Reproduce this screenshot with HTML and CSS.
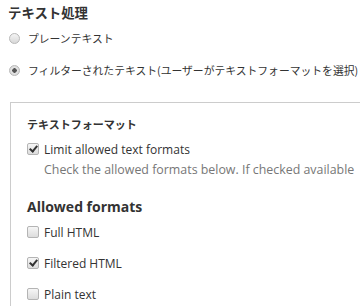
FILE: index.html
```html
<!DOCTYPE html>
<html lang="ja">
<head>
    <meta charset="UTF-8">
    <meta name="viewport" content="width=device-width, initial-scale=1.0">
    <title>テキスト処理</title>
    <link rel="stylesheet" href="styles.css">
</head>
<body>
    <div class="form-item">
        <h2 class="form-title">テキスト処理</h2>

        <div class="radios">
            <label class="option">
                <input type="radio" name="processing" class="form-radio">
                <span class="jp">プレーンテキスト</span>
            </label>
            <label class="option">
                <input type="radio" name="processing" class="form-radio" checked>
                <span class="jp">フィルターされたテキスト(ユーザーがテキストフォーマットを選択)</span>
            </label>
        </div>
    </div>

    <fieldset class="format-fieldset">
        <h3 class="fieldset-title jp">テキストフォーマット</h3>

        <label class="option check-row">
            <input type="checkbox" class="form-checkbox" checked>
            <span>Limit allowed text formats</span>
        </label>
        <div class="description">Check the allowed formats below. If checked available</div>

        <h4 class="group-title">Allowed formats</h4>
        <div class="checkboxes">
            <label class="option check-row">
                <input type="checkbox" class="form-checkbox">
                <span>Full HTML</span>
            </label>
            <label class="option check-row">
                <input type="checkbox" class="form-checkbox" checked>
                <span>Filtered HTML</span>
            </label>
            <label class="option check-row">
                <input type="checkbox" class="form-checkbox">
                <span>Plain text</span>
            </label>
        </div>
    </fieldset>
</body>
</html>
```

FILE: styles.css
```css
* {
    margin: 0;
    padding: 0;
    box-sizing: border-box;
}

body {
    font-family: "Open Sans", "Noto Sans CJK JP", sans-serif;
    font-size: 12px;
    color: #333;
    background: #fff;
    padding-left: 8px;
    overflow: hidden;
}

.jp {
    font-family: "Noto Sans CJK JP", sans-serif;
}

.form-title {
    font-family: "Noto Sans CJK JP", sans-serif;
    font-size: 13.4px;
    font-weight: 700;
    line-height: 20px;
    margin-top: 2px;
}

.radios {
    display: flex;
    flex-direction: column;
    gap: 12px;
    margin-top: 6px;
}

.option {
    display: flex;
    align-items: center;
    height: 20px;
    white-space: nowrap;
}

.radios .option span {
    font-size: 10.8px;
    color: #333;
}

.form-radio {
    appearance: none;
    width: 11px;
    height: 11px;
    margin: 0 8px 0 1px;
    border: 1px solid #b8b8b8;
    border-radius: 50%;
    background: linear-gradient(#f4f4f4, #d8d8d8);
    flex-shrink: 0;
}

.form-radio:checked {
    background: radial-gradient(circle, #555 0, #555 2px, #e4e4e4 2.5px, #d4d4d4 100%);
}

.format-fieldset {
    width: 420px;
    margin: 22px 0 0 2px;
    border: 1px solid #ccc;
    padding: 11px 16px 10px;
}

.fieldset-title {
    font-size: 11px;
    font-weight: 700;
    line-height: 20px;
}

.check-row {
    margin-top: 5px;
}

.form-checkbox {
    appearance: none;
    position: relative;
    width: 12px;
    height: 12px;
    margin-right: 5px;
    border: 1px solid #b4b4b4;
    border-radius: 2px;
    background: linear-gradient(#f6f6f6, #dcdcdc);
    flex-shrink: 0;
}

.form-checkbox:checked::after {
    content: "";
    position: absolute;
    left: 3px;
    top: 0;
    width: 3px;
    height: 6px;
    border: solid #333;
    border-width: 0 2px 2px 0;
    transform: rotate(40deg);
}

.description {
    margin: 2px 0 0 17px;
    font-size: 12.4px;
    line-height: 18px;
    color: #777;
    white-space: nowrap;
}

.group-title {
    font-size: 14px;
    font-weight: 700;
    line-height: 20px;
    margin-top: 18px;
}

.checkboxes {
    display: flex;
    flex-direction: column;
    gap: 11px;
    margin-top: 5px;
}

.checkboxes .check-row {
    margin-top: 0;
}
```
